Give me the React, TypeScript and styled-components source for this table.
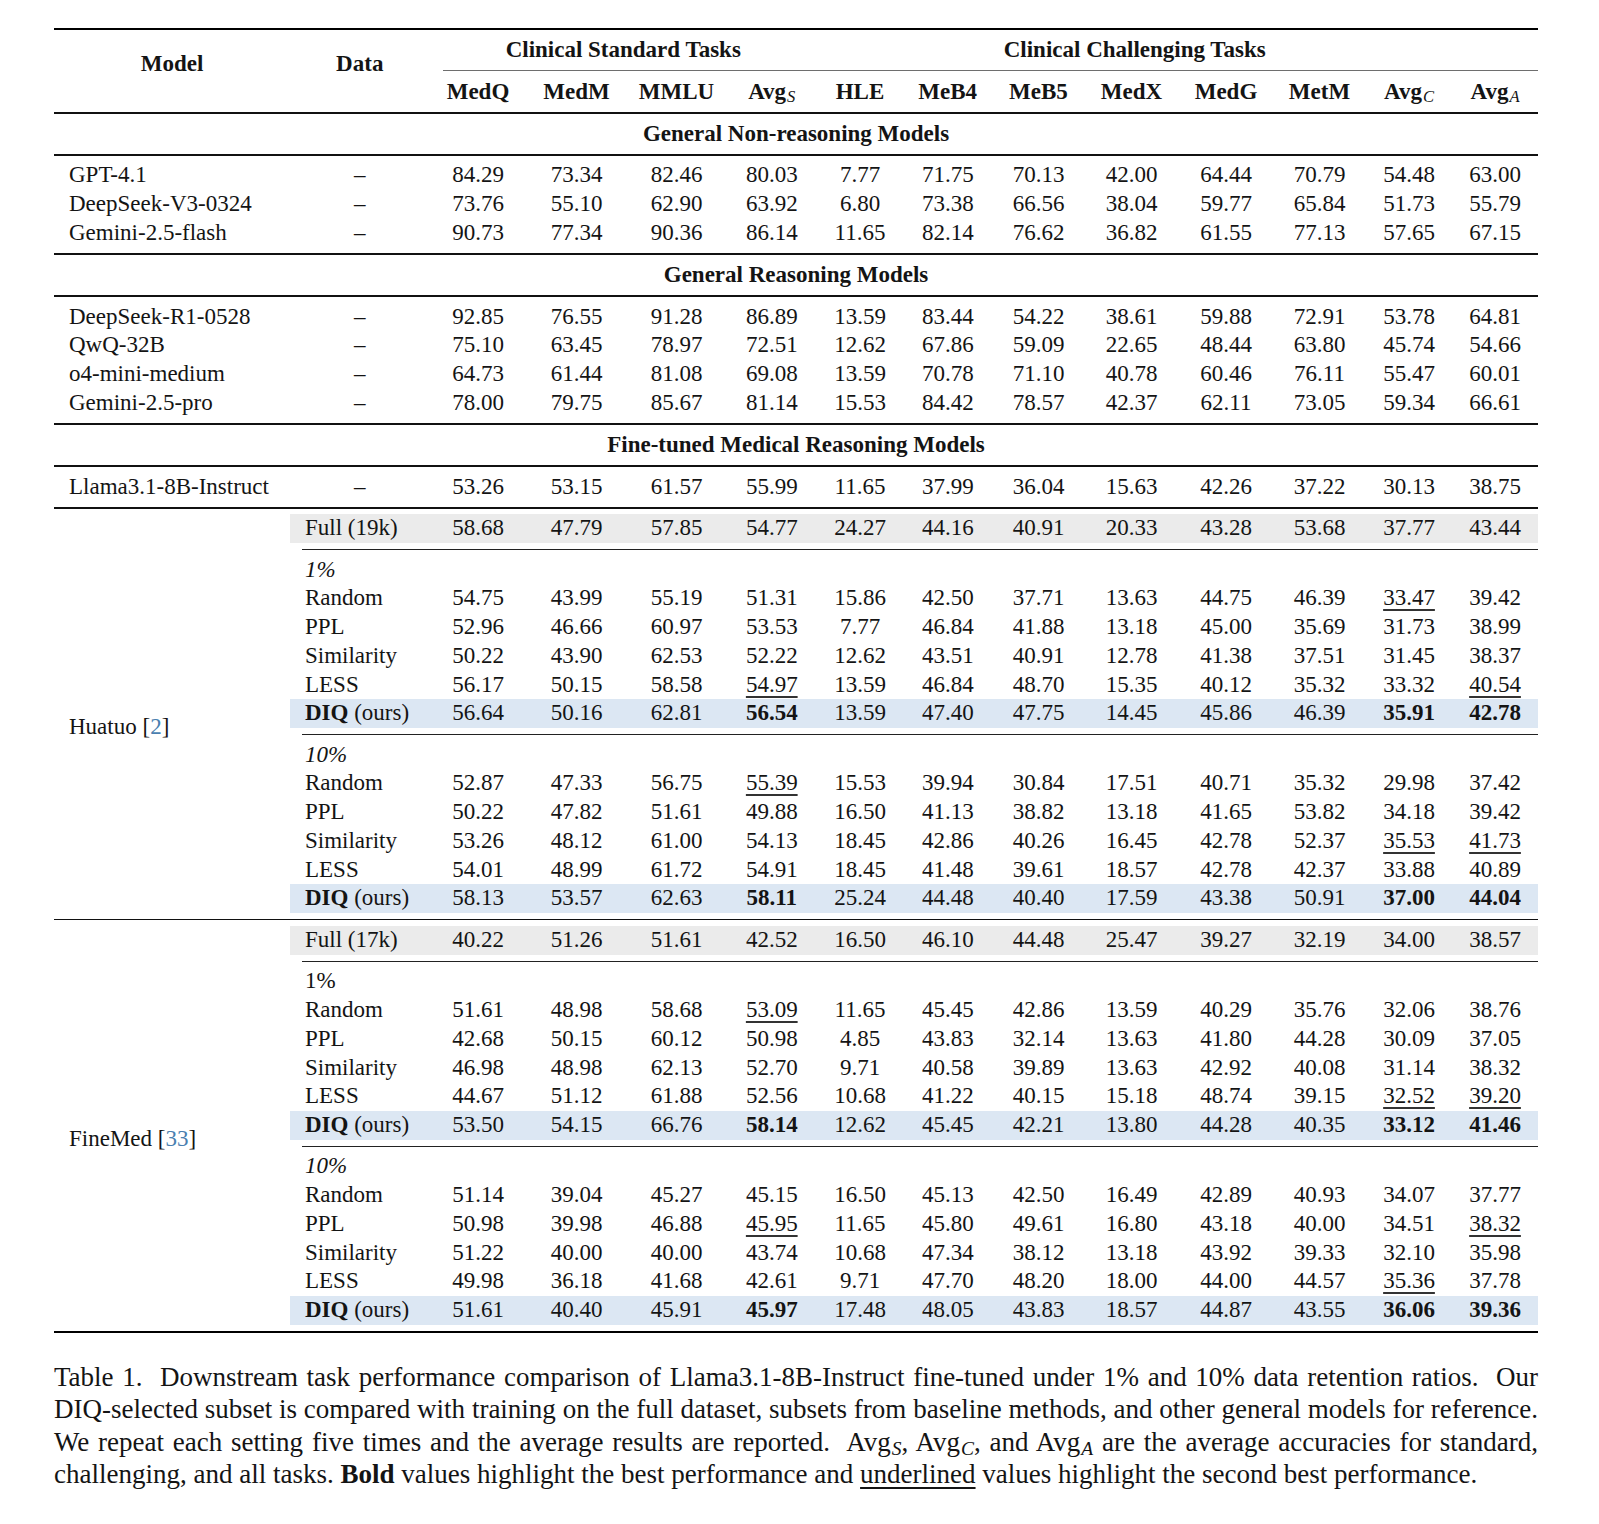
import React from 'react';
import styled, { createGlobalStyle } from 'styled-components';

type Band = 'gray' | 'blue';

interface DataRow {
  name: string;
  values: string[];
  band?: Band;
  strong?: boolean;
}

interface SubGroup {
  label: string;
  italic: boolean;
  rows: DataRow[];
}

interface FineTuneGroup {
  model: string;
  cite: string;
  full: DataRow;
  subs: SubGroup[];
}

// column widths measured off the reference, table starts at x=54
const COLS = [236, 139.5, 97, 100, 100, 90.5, 86, 89.5, 92, 94, 95, 92, 87, 85];
const cols = (list: number[]) => list.map(w => `${w}px`).join(' ');

const TASKS = ['MedQ', 'MedM', 'MMLU', 'Avg|S', 'HLE', 'MeB4', 'MeB5', 'MedX', 'MedG', 'MetM', 'Avg|C', 'Avg|A'];

const split = (s: string) => s.trim().split(/\s+/);

const nonReasoning: DataRow[] = [
  { name: 'GPT-4.1', values: split('84.29 73.34 82.46 80.03 7.77 71.75 70.13 42.00 64.44 70.79 54.48 63.00') },
  { name: 'DeepSeek-V3-0324', values: split('73.76 55.10 62.90 63.92 6.80 73.38 66.56 38.04 59.77 65.84 51.73 55.79') },
  { name: 'Gemini-2.5-flash', values: split('90.73 77.34 90.36 86.14 11.65 82.14 76.62 36.82 61.55 77.13 57.65 67.15') },
];

const reasoning: DataRow[] = [
  { name: 'DeepSeek-R1-0528', values: split('92.85 76.55 91.28 86.89 13.59 83.44 54.22 38.61 59.88 72.91 53.78 64.81') },
  { name: 'QwQ-32B', values: split('75.10 63.45 78.97 72.51 12.62 67.86 59.09 22.65 48.44 63.80 45.74 54.66') },
  { name: 'o4-mini-medium', values: split('64.73 61.44 81.08 69.08 13.59 70.78 71.10 40.78 60.46 76.11 55.47 60.01') },
  { name: 'Gemini-2.5-pro', values: split('78.00 79.75 85.67 81.14 15.53 84.42 78.57 42.37 62.11 73.05 59.34 66.61') },
];

const baseModel: DataRow[] = [
  { name: 'Llama3.1-8B-Instruct', values: split('53.26 53.15 61.57 55.99 11.65 37.99 36.04 15.63 42.26 37.22 30.13 38.75') },
];

// "_" = underlined (second best), "*" = bold (best)
const groups: FineTuneGroup[] = [
  {
    model: 'Huatuo',
    cite: '2',
    full: { name: 'Full (19k)', band: 'gray', values: split('58.68 47.79 57.85 54.77 24.27 44.16 40.91 20.33 43.28 53.68 37.77 43.44') },
    subs: [
      {
        label: '1%',
        italic: true,
        rows: [
          { name: 'Random', values: split('54.75 43.99 55.19 51.31 15.86 42.50 37.71 13.63 44.75 46.39 _33.47 39.42') },
          { name: 'PPL', values: split('52.96 46.66 60.97 53.53 7.77 46.84 41.88 13.18 45.00 35.69 31.73 38.99') },
          { name: 'Similarity', values: split('50.22 43.90 62.53 52.22 12.62 43.51 40.91 12.78 41.38 37.51 31.45 38.37') },
          { name: 'LESS', values: split('56.17 50.15 58.58 _54.97 13.59 46.84 48.70 15.35 40.12 35.32 33.32 _40.54') },
          { name: 'DIQ', strong: true, band: 'blue', values: split('56.64 50.16 62.81 *56.54 13.59 47.40 47.75 14.45 45.86 46.39 *35.91 *42.78') },
        ],
      },
      {
        label: '10%',
        italic: true,
        rows: [
          { name: 'Random', values: split('52.87 47.33 56.75 _55.39 15.53 39.94 30.84 17.51 40.71 35.32 29.98 37.42') },
          { name: 'PPL', values: split('50.22 47.82 51.61 49.88 16.50 41.13 38.82 13.18 41.65 53.82 34.18 39.42') },
          { name: 'Similarity', values: split('53.26 48.12 61.00 54.13 18.45 42.86 40.26 16.45 42.78 52.37 _35.53 _41.73') },
          { name: 'LESS', values: split('54.01 48.99 61.72 54.91 18.45 41.48 39.61 18.57 42.78 42.37 33.88 40.89') },
          { name: 'DIQ', strong: true, band: 'blue', values: split('58.13 53.57 62.63 *58.11 25.24 44.48 40.40 17.59 43.38 50.91 *37.00 *44.04') },
        ],
      },
    ],
  },
  {
    model: 'FineMed',
    cite: '33',
    full: { name: 'Full (17k)', band: 'gray', values: split('40.22 51.26 51.61 42.52 16.50 46.10 44.48 25.47 39.27 32.19 34.00 38.57') },
    subs: [
      {
        label: '1%',
        italic: false,
        rows: [
          { name: 'Random', values: split('51.61 48.98 58.68 _53.09 11.65 45.45 42.86 13.59 40.29 35.76 32.06 38.76') },
          { name: 'PPL', values: split('42.68 50.15 60.12 50.98 4.85 43.83 32.14 13.63 41.80 44.28 30.09 37.05') },
          { name: 'Similarity', values: split('46.98 48.98 62.13 52.70 9.71 40.58 39.89 13.63 42.92 40.08 31.14 38.32') },
          { name: 'LESS', values: split('44.67 51.12 61.88 52.56 10.68 41.22 40.15 15.18 48.74 39.15 _32.52 _39.20') },
          { name: 'DIQ', strong: true, band: 'blue', values: split('53.50 54.15 66.76 *58.14 12.62 45.45 42.21 13.80 44.28 40.35 *33.12 *41.46') },
        ],
      },
      {
        label: '10%',
        italic: true,
        rows: [
          { name: 'Random', values: split('51.14 39.04 45.27 45.15 16.50 45.13 42.50 16.49 42.89 40.93 34.07 37.77') },
          { name: 'PPL', values: split('50.98 39.98 46.88 _45.95 11.65 45.80 49.61 16.80 43.18 40.00 34.51 _38.32') },
          { name: 'Similarity', values: split('51.22 40.00 40.00 43.74 10.68 47.34 38.12 13.18 43.92 39.33 32.10 35.98') },
          { name: 'LESS', values: split('49.98 36.18 41.68 42.61 9.71 47.70 48.20 18.00 44.00 44.57 _35.36 37.78') },
          { name: 'DIQ', strong: true, band: 'blue', values: split('51.61 40.40 45.91 *45.97 17.48 48.05 43.83 18.57 44.87 43.55 *36.06 *39.36') },
        ],
      },
    ],
  },
];

const GlobalStyle = createGlobalStyle`
  html, body {
    margin: 0;
    padding: 0;
    background: #ffffff;
  }
  body {
    font-family: "Liberation Serif", "Times New Roman", serif;
    color: #141414;
  }
`;

const Page = styled.div`
  width: 1599px;
  box-sizing: border-box;
  padding: 28px 0 40px 54px;
`;

const Table = styled.div`
  width: 1484px;
  font-size: 23px;
`;

const Rule = styled.div<{ $h: number; $color?: string; $inset?: number }>`
  height: ${({ $h }) => $h}px;
  background: ${({ $color }) => $color ?? '#111'};
  margin-left: ${({ $inset }) => $inset ?? 0}px;
`;

// header
const Head = styled.div`
  display: grid;
  grid-template-columns: ${cols(COLS)};
  grid-template-rows: 40px 1px 41px;
  font-weight: 700;
`;

const HeadLabel = styled.div<{ $col: number }>`
  grid-column: ${({ $col }) => $col};
  grid-row: 1 / 4;
  text-align: center;
  padding-top: 20px;
  line-height: 28px;
`;

const GroupTitle = styled.div<{ $from: number; $to: number }>`
  grid-column: ${({ $from, $to }) => `${$from} / ${$to}`};
  grid-row: 1;
  align-self: center;
  text-align: center;
  line-height: 28px;
`;

const GroupRule = styled.div<{ $from: number; $to: number; $trim?: number }>`
  grid-column: ${({ $from, $to }) => `${$from} / ${$to}`};
  grid-row: 2;
  background: #6e6e6e;
  margin-left: ${({ $trim }) => $trim ?? 0}px;
`;

const ColName = styled.div<{ $col: number }>`
  grid-column: ${({ $col }) => $col};
  grid-row: 3;
  align-self: center;
  text-align: center;
  line-height: 28px;
  white-space: nowrap;
`;

const Sub = styled.span`
  font-style: italic;
  font-weight: 400;
  font-size: 0.72em;
  line-height: 0;
  vertical-align: -0.22em;
  margin-left: 1px;
`;

const SectionTitle = styled.div`
  height: 40.5px;
  line-height: 40.5px;
  text-align: center;
  font-weight: 700;
`;

// body
const Block = styled.div`
  padding: 5.75px 0;
`;

const Row = styled.div<{ $inner?: boolean; $band?: Band }>`
  display: grid;
  grid-template-columns: ${({ $inner }) => cols($inner ? COLS.slice(1) : COLS)};
  height: 28.75px;
  line-height: 28.75px;
  background: ${({ $band }) => ($band === 'gray' ? '#ebebeb' : $band === 'blue' ? '#dce7f3' : 'transparent')};
`;

const NameCell = styled.div<{ $italic?: boolean }>`
  padding-left: 15px;
  white-space: nowrap;
  font-style: ${({ $italic }) => ($italic ? 'italic' : 'normal')};
`;

const CenterCell = styled.div`
  text-align: center;
  white-space: nowrap;
`;

const Value = styled.span<{ $bold?: boolean; $under?: boolean }>`
  font-weight: ${({ $bold }) => ($bold ? 700 : 400)};
  text-decoration: ${({ $under }) => ($under ? 'underline' : 'none')};
  text-decoration-thickness: 1.5px;
  text-underline-offset: 4px;
  text-decoration-color: #333;
`;

const Group = styled.div`
  display: grid;
  grid-template-columns: 236px 1fr;
`;

// multirow label sits a little below the middle of its group
const GroupLabel = styled.div`
  align-self: center;
  padding: 27px 0 0 15px;
  line-height: 28.75px;
  white-space: nowrap;
`;

const Cite = styled.span`
  color: #4a7fb0;
`;

// caption
const Caption = styled.div`
  width: 1484px;
  margin-top: 28.5px;
  font-size: 27px;
  line-height: 32.3px;
`;

const CaptionLine = styled.div<{ $last?: boolean }>`
  height: 32.3px;
  text-align: justify;
  text-align-last: ${({ $last }) => ($last ? 'left' : 'justify')};
`;

const Underlined = styled.span`
  text-decoration: underline;
  text-decoration-thickness: 1.5px;
  text-underline-offset: 4px;
`;

const TaskName = ({ label }: { label: string }) => {
  const [base, sub] = label.split('|');
  return (
    <>
      {base}
      {sub && <Sub>{sub}</Sub>}
    </>
  );
};

const Cells = ({ values }: { values: string[] }) => (
  <>
    {values.map((v, i) => (
      <CenterCell key={i}>
        <Value $bold={v.startsWith('*')} $under={v.startsWith('_')}>
          {v.replace(/^[*_]/, '')}
        </Value>
      </CenterCell>
    ))}
  </>
);

const PlainRows = ({ rows }: { rows: DataRow[] }) => (
  <Block>
    {rows.map(r => (
      <Row key={r.name}>
        <NameCell>{r.name}</NameCell>
        <CenterCell>–</CenterCell>
        <Cells values={r.values} />
      </Row>
    ))}
  </Block>
);

const MethodRow = ({ row }: { row: DataRow }) => (
  <Row $inner $band={row.band}>
    <NameCell>
      {row.strong ? (
        <>
          <b>{row.name}</b> (ours)
        </>
      ) : (
        row.name
      )}
    </NameCell>
    <Cells values={row.values} />
  </Row>
);

const FineTuneBlock = ({ group }: { group: FineTuneGroup }) => (
  <Group>
    <GroupLabel>
      {group.model} [<Cite>{group.cite}</Cite>]
    </GroupLabel>
    <div>
      <Block>
        <MethodRow row={group.full} />
      </Block>
      {group.subs.map(sub => (
        <React.Fragment key={sub.label}>
          <Rule $h={1} $inset={12} $color="#222" />
          <Block>
            <Row $inner>
              <NameCell $italic={sub.italic}>{sub.label}</NameCell>
            </Row>
            {sub.rows.map(r => (
              <MethodRow key={r.name} row={r} />
            ))}
          </Block>
        </React.Fragment>
      ))}
    </div>
  </Group>
);

const App: React.FC = () => {
  return (
    <Page>
      <GlobalStyle />
      <Table>
        <Rule $h={2} $color="#000" />
        <Head>
          <HeadLabel $col={1}>Model</HeadLabel>
          <HeadLabel $col={2}>Data</HeadLabel>
          <GroupTitle $from={3} $to={7}>Clinical Standard Tasks</GroupTitle>
          <GroupTitle $from={7} $to={14}>Clinical Challenging Tasks</GroupTitle>
          <GroupRule $from={3} $to={7} $trim={13} />
          <GroupRule $from={7} $to={15} />
          {TASKS.map((t, i) => (
            <ColName key={t} $col={i + 3}>
              <TaskName label={t} />
            </ColName>
          ))}
        </Head>
        <Rule $h={1.5} />

        <SectionTitle>General Non-reasoning Models</SectionTitle>
        <Rule $h={1.5} />
        <PlainRows rows={nonReasoning} />
        <Rule $h={1.5} />

        <SectionTitle>General Reasoning Models</SectionTitle>
        <Rule $h={1.5} />
        <PlainRows rows={reasoning} />
        <Rule $h={1.5} />

        <SectionTitle>Fine-tuned Medical Reasoning Models</SectionTitle>
        <Rule $h={1.5} />
        <PlainRows rows={baseModel} />
        <Rule $h={1.5} />

        <FineTuneBlock group={groups[0]} />
        <Rule $h={1.5} />
        <FineTuneBlock group={groups[1]} />
        <Rule $h={2} $color="#000" />
      </Table>

      <Caption>
        <CaptionLine>
          Table 1.&nbsp; Downstream task performance comparison of Llama3.1-8B-Instruct fine-tuned under 1% and 10% data
          retention ratios.&nbsp; Our
        </CaptionLine>
        <CaptionLine>
          DIQ-selected subset is compared with training on the full dataset, subsets from baseline methods, and other
          general models for reference.
        </CaptionLine>
        <CaptionLine>
          We repeat each setting five times and the average results are reported.&nbsp; Avg<Sub>S</Sub>, Avg
          <Sub>C</Sub>, and Avg<Sub>A</Sub> are the average accuracies for standard,
        </CaptionLine>
        <CaptionLine $last>
          challenging, and all tasks. <b>Bold</b> values highlight the best performance and{' '}
          <Underlined>underlined</Underlined> values highlight the second best performance.
        </CaptionLine>
      </Caption>
    </Page>
  );
};

export default App;
